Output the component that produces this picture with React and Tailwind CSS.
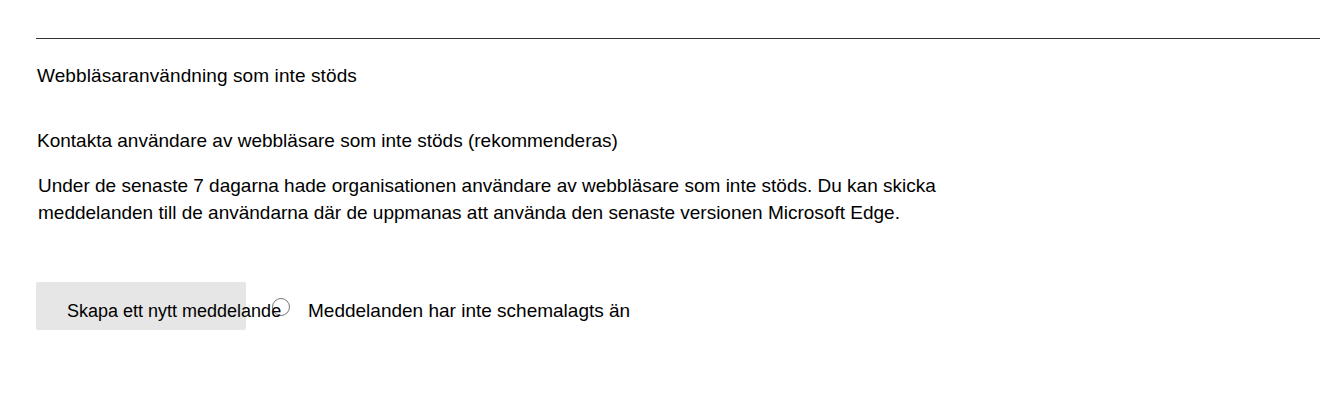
export default function App() {
  return (
    <div className="w-[1320px] h-[400px] bg-white text-black overflow-hidden" style={{ fontFamily: '"Liberation Sans", Arial, sans-serif' }}>
      <div className="pl-[36px] pt-[38px]">
        <div className="h-px bg-[#333333]" />
        <div className="pl-px pt-[25px] text-[19px] leading-[24px] tracking-[0.1px]">Webbläsaranvändning som inte stöds</div>
        <div className="pl-px pt-[41px] text-[19px] leading-[24px]">Kontakta användare av webbläsare som inte stöds (rekommenderas)</div>
        <div className="pl-[2px] pt-[19px] text-[19px] leading-[27px] w-[960px]">
          Under de senaste 7 dagarna hade organisationen användare av webbläsare som inte stöds. Du kan skicka<br />meddelanden till de användarna där de uppmanas att använda den senaste versionen Microsoft Edge.
        </div>
        <div className="pt-[56px] flex items-start">
          <div className="relative w-[210px] h-[48px] bg-[#e6e6e6] rounded-[2px] shrink-0">
            <span className="absolute left-[31px] top-[19px] text-[18px] leading-[20px] whitespace-nowrap">Skapa ett nytt meddelande</span>
          </div>
          <div className="ml-[26px] mt-[16px] w-[18px] h-[18px] rounded-full border border-[#777] shrink-0" />
          <span className="ml-[18px] mt-[17px] text-[19px] leading-[24px] whitespace-nowrap">Meddelanden har inte schemalagts än</span>
        </div>
      </div>
    </div>
  );
}
